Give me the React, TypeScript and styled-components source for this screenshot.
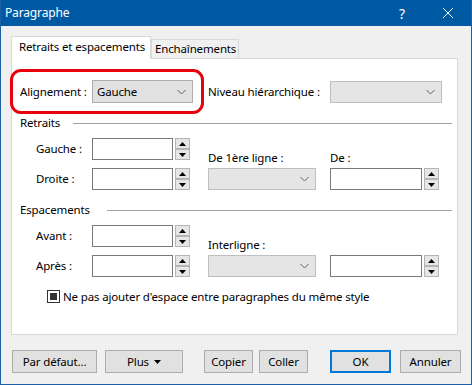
import React from "react";
import styled, { createGlobalStyle } from "styled-components";

const GlobalStyle = createGlobalStyle`
  html, body {
    margin: 0;
    padding: 0;
    background: #ffffff;
  }
  body {
    font-family: "Noto Sans", "Segoe UI", sans-serif;
    font-size: 11.5px;
    letter-spacing: -0.15px;
    color: #000;
  }
  * {
    box-sizing: border-box;
  }
`;

const Window = styled.div`
  width: 472px;
  height: 385px;
  border: 1px solid #1b5ea3;
  border-top: none;
  background: #f0f0f0;
  display: flex;
  flex-direction: column;
`;

const TitleBar = styled.div`
  height: 26px;
  background: #0059a3;
  color: #fff;
  display: flex;
  align-items: center;
  padding-left: 4px;
`;

const Title = styled.div`
  flex: 1;
  font-size: 12px;
  line-height: 26px;
`;

const CaptionButton = styled.div`
  width: 46px;
  height: 26px;
  display: flex;
  align-items: center;
  justify-content: center;
  color: #fff;
  font-size: 14px;
`;

const Body = styled.div`
  padding: 10px 10px 0 10px;
  display: flex;
  flex-direction: column;
`;

const TabStrip = styled.div`
  display: flex;
  align-items: flex-end;
  height: 22px;
`;

const Tab = styled.div<{ $active?: boolean; $w: number }>`
  width: ${(p) => p.$w}px;
  height: ${(p) => (p.$active ? 23 : 19)}px;
  margin-bottom: ${(p) => (p.$active ? -1 : 0)}px;
  border: 1px solid #d9d9d9;
  border-bottom: none;
  background: ${(p) => (p.$active ? "#ffffff" : "#f0f0f0")};
  position: relative;
  z-index: ${(p) => (p.$active ? 2 : 1)};
  padding-left: ${(p) => (p.$active ? 7 : 3)}px;
  line-height: ${(p) => (p.$active ? 19 : 18)}px;
  white-space: nowrap;
`;

const Panel = styled.div`
  width: 447px;
  height: 277px;
  border: 1px solid #d9d9d9;
  background: #fff;
  display: flex;
  flex-direction: column;
  padding-top: 10px;
`;

const TopRow = styled.div`
  display: flex;
  align-items: center;
`;

const Highlight = styled.div`
  margin-left: -2px;
  width: 194px;
  border: 3px solid #e8000b;
  border-radius: 11px;
  padding: 8px 8px 8px 7px;
  display: flex;
  align-items: center;
`;

const Label = styled.div<{ $w: number; $ml?: number }>`
  width: ${(p) => p.$w}px;
  margin-left: ${(p) => p.$ml ?? 0}px;
  white-space: nowrap;
  line-height: 16px;
`;

const Combo = styled.div<{ $w: number; $disabled?: boolean }>`
  width: ${(p) => p.$w}px;
  height: ${(p) => (p.$disabled ? 22 : 23)}px;
  background: ${(p) => (p.$disabled ? "#e5e5e5" : "#e1e1e1")};
  border: 1px solid ${(p) => (p.$disabled ? "#bfbfbf" : "#adadad")};
  display: flex;
  align-items: center;
  padding: 0 6px 0 4px;
  line-height: 16px;
`;

const ComboText = styled.span`
  flex: 1;
`;

const Chevron = () => (
  <svg width="9" height="6" viewBox="0 0 9 6">
    <path d="M0.5 1 L4.5 5 L8.5 1" fill="none" stroke="#606060" strokeWidth="1" />
  </svg>
);

const SectionHeader = styled.div<{ $mt: number }>`
  display: flex;
  align-items: center;
  height: 16px;
  margin-top: ${(p) => p.$mt}px;
  padding-left: 8px;
  padding-right: 5px;
`;

const SectionLine = styled.div`
  flex: 1;
  height: 1px;
  background: #a0a0a0;
`;

const FieldBlock = styled.div`
  display: flex;
  margin-top: 7px;
  padding-left: 24px;
`;

const Stack = styled.div`
  display: flex;
  flex-direction: column;
  gap: 8px;
`;

const FieldRow = styled.div`
  display: flex;
  align-items: center;
  height: 22px;
`;

const CaptionColumn = styled.div<{ $ml: number }>`
  display: flex;
  flex-direction: column;
  padding-top: 12px;
  margin-left: ${(p) => p.$ml}px;
`;

const Caption = styled.div`
  height: 18px;
  line-height: 16px;
  white-space: nowrap;
`;

const NumberBox = styled.div<{ $w: number }>`
  width: ${(p) => p.$w}px;
  height: 22px;
  border: 1px solid #7a7a7a;
  background: #fff;
`;

const SpinGroup = styled.div`
  margin-left: 2px;
  width: 15px;
  height: 22px;
  display: flex;
  flex-direction: column;
  justify-content: space-between;
`;

const SpinButton = styled.div`
  height: 11px;
  background: #e6e6e6;
  border: 1px solid #b5b5b5;
  display: flex;
  align-items: center;
  justify-content: center;
`;

const Spinner = () => (
  <SpinGroup>
    <SpinButton>
      <svg width="7" height="4" viewBox="0 0 7 4">
        <path d="M0 4 L3.5 0 L7 4 Z" fill="#000" />
      </svg>
    </SpinButton>
    <SpinButton>
      <svg width="7" height="4" viewBox="0 0 7 4">
        <path d="M0 0 L3.5 4 L7 0 Z" fill="#000" />
      </svg>
    </SpinButton>
  </SpinGroup>
);

const CheckRow = styled.div`
  display: flex;
  align-items: center;
  margin-top: 13px;
  padding-left: 35px;
  height: 13px;
  white-space: nowrap;
`;

const CheckBox = styled.div`
  width: 13px;
  height: 13px;
  border: 1px solid #333;
  background: #fff;
  display: flex;
  align-items: center;
  justify-content: center;
  margin-right: 3px;
  flex-shrink: 0;
`;

const CheckFill = styled.div`
  width: 7px;
  height: 7px;
  background: #333;
`;

const ButtonRow = styled.div`
  display: flex;
  margin-top: 15px;
  padding-left: 1px;
`;

const Button = styled.div<{ $w: number; $ml?: number; $default?: boolean }>`
  width: ${(p) => p.$w}px;
  height: 23px;
  margin-left: ${(p) => p.$ml ?? 0}px;
  background: #e1e1e1;
  border: ${(p) => (p.$default ? "2px solid #0078d7" : "1px solid #adadad")};
  display: flex;
  align-items: center;
  justify-content: center;
  gap: 5px;
  white-space: nowrap;
`;

const IndentFields = ({ rows, captions }: { rows: string[]; captions: string[] }) => (
  <FieldBlock>
    <Stack>
      {rows.map((r) => (
        <FieldRow key={r}>
          <Label $w={56}>{r}</Label>
          <NumberBox $w={81} />
          <Spinner />
        </FieldRow>
      ))}
    </Stack>
    <CaptionColumn $ml={18}>
      <Caption>{captions[0]}</Caption>
      <Combo $w={108} $disabled>
        <ComboText />
        <Chevron />
      </Combo>
    </CaptionColumn>
    <CaptionColumn $ml={14}>
      <Caption>{captions[1]}</Caption>
      <FieldRow>
        <NumberBox $w={92} />
        <Spinner />
      </FieldRow>
    </CaptionColumn>
  </FieldBlock>
);

export default function App() {
  return (
    <>
      <GlobalStyle />
      <Window>
        <TitleBar>
          <Title>Paragraphe</Title>
          <CaptionButton>?</CaptionButton>
          <CaptionButton>
            <svg width="10" height="10" viewBox="0 0 10 10">
              <path d="M0 0 L10 10 M10 0 L0 10" stroke="#fff" strokeWidth="1" />
            </svg>
          </CaptionButton>
        </TitleBar>
        <Body>
          <TabStrip>
            <Tab $active $w={140}>Retraits et espacements</Tab>
            <Tab $w={88}>Enchaînements</Tab>
          </TabStrip>
          <Panel>
            <TopRow>
              <Highlight>
                <Label $w={72}>Alignement :</Label>
                <Combo $w={101}>
                  <ComboText>Gauche</ComboText>
                  <Chevron />
                </Combo>
              </Highlight>
              <Label $w={122} $ml={4}>Niveau hiérarchique :</Label>
              <Combo $w={112} $disabled>
                <ComboText />
                <Chevron />
              </Combo>
            </TopRow>

            <SectionHeader $mt={1}>
              <Label $w={53}>Retraits</Label>
              <SectionLine />
            </SectionHeader>
            <IndentFields rows={["Gauche :", "Droite :"]} captions={["De 1ère ligne :", "De :"]} />

            <SectionHeader $mt={12}>
              <Label $w={87}>Espacements</Label>
              <SectionLine />
            </SectionHeader>
            <IndentFields rows={["Avant :", "Après :"]} captions={["Interligne :", ""]} />

            <CheckRow>
              <CheckBox>
                <CheckFill />
              </CheckBox>
              Ne pas ajouter d'espace entre paragraphes du même style
            </CheckRow>
          </Panel>
          <ButtonRow>
            <Button $w={85}>Par défaut...</Button>
            <Button $w={78} $ml={8}>
              Plus
              <svg width="7" height="4" viewBox="0 0 7 4">
                <path d="M0 0 L3.5 4 L7 0 Z" fill="#000" />
              </svg>
            </Button>
            <Button $w={49} $ml={21}>Copier</Button>
            <Button $w={49} $ml={6}>Coller</Button>
            <Button $w={61} $ml={22} $default>OK</Button>
            <Button $w={61} $ml={9}>Annuler</Button>
          </ButtonRow>
        </Body>
      </Window>
    </>
  );
}
